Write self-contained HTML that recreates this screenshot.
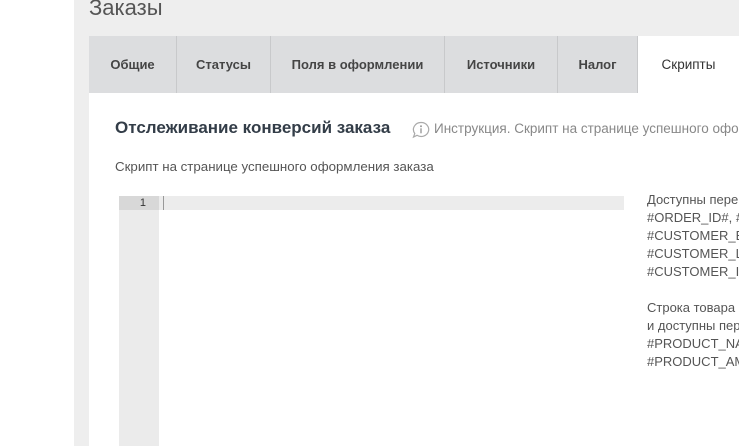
<!DOCTYPE html>
<html><head><meta charset="utf-8"><style>
*{margin:0;padding:0;box-sizing:border-box}
html,body{width:739px;height:446px;overflow:hidden}
body{background:#fff;font-family:"Liberation Sans","DejaVu Sans",sans-serif;position:relative}
.strip{position:absolute;left:74px;top:0;width:665px;height:446px;background:#eeeeee}
.title{position:absolute;left:89px;top:-5px;font-size:22px;color:#555}
.tabs{position:absolute;left:89px;top:36px;width:650px;height:57px;background:#dcdddf}
.tab{position:absolute;top:0;height:57px;line-height:57px;text-align:center;font-size:13px;font-weight:bold;color:#454545;border-right:1px solid #c8c9cb;white-space:nowrap}
.panel{position:absolute;left:89px;top:93px;width:650px;height:353px;background:#fff}
.h{position:absolute;left:115px;top:118px;font-size:17px;font-weight:bold;color:#333d48;white-space:nowrap}
.ins{position:absolute;left:434px;top:121px;font-size:13.5px;color:#888;white-space:nowrap;width:305px;overflow:hidden}
.sub{position:absolute;left:115px;top:159px;font-size:13.3px;color:#555;white-space:nowrap}
.gut{position:absolute;left:119px;top:196px;width:40px;height:250px;background:#ebebeb}
.ln{position:absolute;left:119px;top:196px;width:40px;height:14px;background:#d8d8d8;font-size:11px;color:#333;text-align:right;padding-right:13px;line-height:14px}
.act{position:absolute;left:159px;top:196px;width:465px;height:14px;background:#ececec}
.cur{position:absolute;left:163px;top:196px;width:1px;height:14px;background:#999}
.side{position:absolute;left:647px;top:191px;font-size:13px;color:#555;line-height:18px;white-space:nowrap;width:92px;overflow:hidden}
</style></head><body>
<div class="strip"></div>
<div class="title">Заказы</div>
<div class="tabs">
<div class="tab" style="left:0;width:88px">Общие</div>
<div class="tab" style="left:88px;width:94px">Статусы</div>
<div class="tab" style="left:182px;width:174px">Поля в оформлении</div>
<div class="tab" style="left:356px;width:113px">Источники</div>
<div class="tab" style="left:469px;width:80px">Налог</div>
<div class="tab" style="left:549px;width:101px;background:#fff;border:none;height:58px;font-weight:normal;color:#333;font-size:13.5px">Скрипты</div>
</div>
<div class="panel"></div>
<div class="h">Отслеживание конверсий заказа</div>
<svg style="position:absolute;left:411px;top:121px" width="20" height="18" viewBox="0 0 20 18"><path d="M10 1.5a7.5 7 0 1 1-4 12.8L2.5 16l1.3-3.5A7.5 7 0 0 1 10 1.5z" fill="none" stroke="#aaa" stroke-width="1.2"/><circle cx="10" cy="5.3" r="1" fill="#999"/><rect x="9.3" y="7.3" width="1.4" height="5" fill="#999"/></svg>
<div class="ins">Инструкция. Скрипт на странице успешного оформления заказа</div>
<div class="sub">Скрипт на странице успешного оформления заказа</div>
<div class="gut"></div>
<div class="ln">1</div>
<div class="act"></div>
<div class="cur"></div>
<div class="side">Доступны переменные:<br>#ORDER_ID#, #ORDER_SUM#<br>#CUSTOMER_EMAIL#<br>#CUSTOMER_LASTNAME#<br>#CUSTOMER_ID#<br><br>Строка товара<br>и доступны переменные<br>#PRODUCT_NAME#<br>#PRODUCT_AMOUNT#</div>
</body></html>
